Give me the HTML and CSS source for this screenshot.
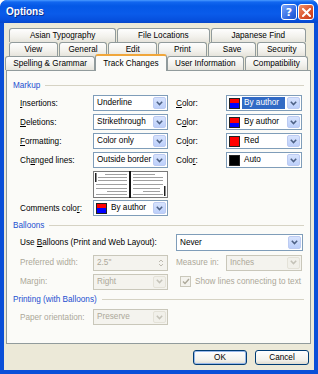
FILE: index.html
```html
<!DOCTYPE html>
<html lang="en">
<head>
  <meta charset="UTF-8">
  <title>Options</title>
  <link rel="stylesheet" href="styles.css">
</head>
<body>
  <div class="window">
    <div class="titlebar">
      <span class="title">Options</span>
      <div class="caption-btns">
        <span class="cbtn help">?</span>
        <span class="cbtn close">
          <svg width="9" height="9" viewBox="0 0 9 9"><path d="M1 1 L8 8 M8 1 L1 8" stroke="#fff" stroke-width="2" stroke-linecap="square"/></svg>
        </span>
      </div>
    </div>

    <div class="client">
      <div class="tabs">
        <div class="tab-row back grow">
          <span class="tab">Asian Typography</span>
          <span class="tab">File Locations</span>
          <span class="tab">Japanese Find</span>
        </div>
        <div class="tab-row back equal">
          <span class="tab">View</span>
          <span class="tab">General</span>
          <span class="tab">Edit</span>
          <span class="tab">Print</span>
          <span class="tab">Save</span>
          <span class="tab">Security</span>
        </div>
        <div class="tab-row front grow">
          <span class="tab">Spelling &amp; Grammar</span>
          <span class="tab active">Track Changes</span>
          <span class="tab">User Information</span>
          <span class="tab">Compatibility</span>
        </div>
      </div>

      <div class="panel">
        <div class="group-title first"><span>Markup</span></div>
        <div class="grid markup">
          <span class="label"><u>I</u>nsertions:</span>
          <div class="select"><span class="val">Underline</span><span class="arrow"><svg width="7" height="5" viewBox="0 0 7 5"><path d="M0.8 0.8 L3.5 3.6 L6.2 0.8" fill="none" stroke="#4d6185" stroke-width="1.5"/></svg></span></div>
          <span class="label color-label"><u>C</u>olor:</span>
          <div class="select"><span class="swatch author"></span><span class="val hl">By author</span><span class="arrow"><svg width="7" height="5" viewBox="0 0 7 5"><path d="M0.8 0.8 L3.5 3.6 L6.2 0.8" fill="none" stroke="#4d6185" stroke-width="1.5"/></svg></span></div>

          <span class="label"><u>D</u>eletions:</span>
          <div class="select"><span class="val">Strikethrough</span><span class="arrow"><svg width="7" height="5" viewBox="0 0 7 5"><path d="M0.8 0.8 L3.5 3.6 L6.2 0.8" fill="none" stroke="#4d6185" stroke-width="1.5"/></svg></span></div>
          <span class="label color-label">C<u>o</u>lor:</span>
          <div class="select"><span class="swatch author"></span><span class="val">By author</span><span class="arrow"><svg width="7" height="5" viewBox="0 0 7 5"><path d="M0.8 0.8 L3.5 3.6 L6.2 0.8" fill="none" stroke="#4d6185" stroke-width="1.5"/></svg></span></div>

          <span class="label"><u>F</u>ormatting:</span>
          <div class="select"><span class="val">Color only</span><span class="arrow"><svg width="7" height="5" viewBox="0 0 7 5"><path d="M0.8 0.8 L3.5 3.6 L6.2 0.8" fill="none" stroke="#4d6185" stroke-width="1.5"/></svg></span></div>
          <span class="label color-label">Co<u>l</u>or:</span>
          <div class="select"><span class="swatch red"></span><span class="val">Red</span><span class="arrow"><svg width="7" height="5" viewBox="0 0 7 5"><path d="M0.8 0.8 L3.5 3.6 L6.2 0.8" fill="none" stroke="#4d6185" stroke-width="1.5"/></svg></span></div>

          <span class="label">Ch<u>a</u>nged lines:</span>
          <div class="select"><span class="val">Outside border</span><span class="arrow"><svg width="7" height="5" viewBox="0 0 7 5"><path d="M0.8 0.8 L3.5 3.6 L6.2 0.8" fill="none" stroke="#4d6185" stroke-width="1.5"/></svg></span></div>
          <span class="label color-label">Colo<u>r</u>:</span>
          <div class="select"><span class="swatch black"></span><span class="val">Auto</span><span class="arrow"><svg width="7" height="5" viewBox="0 0 7 5"><path d="M0.8 0.8 L3.5 3.6 L6.2 0.8" fill="none" stroke="#4d6185" stroke-width="1.5"/></svg></span></div>

          <span></span>
          <div class="preview">
            <svg width="75" height="27" viewBox="0 0 75 27">
              <rect x="0.5" y="0.5" width="74" height="26" fill="#fff" stroke="#7a7a7a"/>
              <g fill="#a0a0a0">
                <rect x="12" y="3" width="22" height="1"/>
                <rect x="5" y="6" width="29" height="1"/>
                <rect x="5" y="9" width="29" height="1"/>
                <rect x="3" y="13" width="31" height="1"/>
                <rect x="3" y="17" width="31" height="1"/>
                <rect x="14" y="20" width="20" height="1"/>
                <rect x="3" y="23" width="31" height="1"/>
                <rect x="40" y="3" width="22" height="1"/>
                <rect x="40" y="6" width="30" height="1"/>
                <rect x="40" y="9" width="30" height="1"/>
                <rect x="40" y="13" width="30" height="1"/>
                <rect x="40" y="17" width="27" height="1"/>
                <rect x="50" y="20" width="17" height="1"/>
                <rect x="40" y="23" width="30" height="1"/>
              </g>
              <rect x="2" y="2" width="1.5" height="9" fill="#222"/>
              <rect x="36" y="0" width="2" height="27" fill="#111"/>
              <rect x="71" y="15" width="1.5" height="10" fill="#222"/>
            </svg>
          </div>
          <span></span><span></span>
        </div>

        <div class="grid comments">
          <span class="label">Comments colo<u>r</u>:</span>
          <div class="select"><span class="swatch author"></span><span class="val">By author</span><span class="arrow"><svg width="7" height="5" viewBox="0 0 7 5"><path d="M0.8 0.8 L3.5 3.6 L6.2 0.8" fill="none" stroke="#4d6185" stroke-width="1.5"/></svg></span></div>
        </div>

        <div class="group-title"><span>Balloons</span></div>
        <div class="grid balloons">
          <span class="label wide">Use <u>B</u>alloons (Print and Web Layout):</span>
          <div class="select never"><span class="val">Never</span><span class="arrow"><svg width="7" height="5" viewBox="0 0 7 5"><path d="M0.8 0.8 L3.5 3.6 L6.2 0.8" fill="none" stroke="#4d6185" stroke-width="1.5"/></svg></span></div>

          <span class="label off">Preferred width:</span>
          <div class="select off"><span class="val">2.5"</span><span class="spin"><svg width="6" height="10" viewBox="0 0 6 10"><path d="M1 4 L3 2 L5 4 M1 6 L3 8 L5 6" fill="none" stroke="#bdbab0" stroke-width="1"/></svg></span></div>
          <span class="label off color-label">Measure in:</span>
          <div class="select off"><span class="val">Inches</span><span class="arrow"><svg width="7" height="5" viewBox="0 0 7 5"><path d="M0.8 0.8 L3.5 3.6 L6.2 0.8" fill="none" stroke="#c4c2b8" stroke-width="1.5"/></svg></span></div>

          <span class="label off">Margin:</span>
          <div class="select off"><span class="val">Right</span><span class="arrow"><svg width="7" height="5" viewBox="0 0 7 5"><path d="M0.8 0.8 L3.5 3.6 L6.2 0.8" fill="none" stroke="#c4c2b8" stroke-width="1.5"/></svg></span></div>
          <label class="check off">
            <span class="box"><svg width="8" height="7" viewBox="0 0 8 7"><path d="M1 3.5 L3 5.5 L7 1" fill="none" stroke="#aca899" stroke-width="1.4"/></svg></span>
            Show lines connecting to text
          </label>
        </div>

        <div class="group-title printing-title"><span>Printing (with Balloons)</span></div>
        <div class="grid printing">
          <span class="label off">Paper orientation:</span>
          <div class="select off"><span class="val">Preserve</span><span class="arrow"><svg width="7" height="5" viewBox="0 0 7 5"><path d="M0.8 0.8 L3.5 3.6 L6.2 0.8" fill="none" stroke="#c4c2b8" stroke-width="1.5"/></svg></span></div>
        </div>
      </div>

      <div class="buttons">
        <button class="btn default">OK</button>
        <button class="btn">Cancel</button>
      </div>
    </div>
  </div>
</body>
</html>
```

FILE: styles.css
```css
body {
  margin: 0;
  font-family: "Liberation Sans", Arial, sans-serif;
  font-size: 8.2px;
  color: #000;
  background: #fff;
}

/* Window frame */
.window {
  width: 318px;
  height: 374px;
  box-sizing: border-box;
  background: #0a4fd8;
  border-radius: 7px 7px 0 0;
  padding: 0 4px 4px;
  display: flex;
  flex-direction: column;
  overflow: hidden;
}
.titlebar {
  height: 23px;
  margin: 0 -4px;
  padding: 0 4px 0 6px;
  display: flex;
  align-items: center;
  justify-content: space-between;
  background: linear-gradient(#4a9bff 0, #1267f0 2px, #0458e6 6px, #0a5bea 14px, #0650de 20px, #0847c8 23px);
  border-radius: 7px 7px 0 0;
}
.title {
  color: #fff;
  font-weight: bold;
  font-size: 10px;
  text-shadow: 1px 1px 0 #0a2f8c;
}
.caption-btns {
  display: flex;
  gap: 1px;
  margin-top: 1px;
}
.cbtn {
  width: 14px;
  height: 14px;
  border: 1px solid #fff;
  border-radius: 3px;
  display: flex;
  align-items: center;
  justify-content: center;
  color: #fff;
  font-weight: bold;
  font-size: 11px;
  font-family: "DejaVu Sans", sans-serif;
}
.help { background: linear-gradient(135deg, #7aa6fb, #2a63e0 70%, #1b50c8); }
.close { background: linear-gradient(135deg, #f0916b, #d9502a 60%, #c4391a); }

.client {
  flex: 1;
  background: #ece9d8;
  padding-top: 5px;
  display: flex;
  flex-direction: column;
}

/* Tabs */
.tab-row {
  display: flex;
  height: 14px;
}
.tab-row.back {
  margin: 0 7px 0 5px;
}
.tab-row.front {
  margin: 0 5px 0 1px;
  position: relative;
  z-index: 1;
}
.tab {
  height: 14px;
  box-sizing: border-box;
  border: 1px solid #919b9c;
  border-bottom: none;
  border-radius: 3px 3px 0 0;
  background: linear-gradient(#fefefe, #f2f1ec 60%, #e6e4dc);
  display: flex;
  align-items: center;
  justify-content: center;
  white-space: nowrap;
  margin-right: 1px;
}
.grow .tab { flex: 1 1 auto; padding: 0 4px; }
.equal .tab { flex: 1 1 0; }
.tab.active {
  height: 17px;
  margin-top: -2px;
  margin-left: -1px;
  margin-right: 0;
  border-top: 2px solid #f0a63a;
  background: #fbfbf8;
}

/* Panel */
.panel {
  height: 274px;
  box-sizing: border-box;
  margin: 0 3px 0 2px;
  border: 1px solid #919b9c;
  background: #fbfbf8;
  padding: 0 6px;
}
.group-title {
  display: flex;
  align-items: center;
  height: 12px;
  margin-top: 3px;
  color: #1c4fd0;
}
.group-title.first { margin-top: 8px; }
.group-title.printing-title { margin-top: 4px; }
.group-title::after {
  content: "";
  flex: 1;
  height: 1px;
  background: #d6d3c4;
  margin-left: 5px;
}

.grid {
  display: grid;
  grid-template-columns: 73px 75px 58px 76px;
  grid-auto-rows: 16px;
  row-gap: 3px;
  margin-left: 7px;
  align-items: center;
}
.markup { margin-top: 4px; grid-template-rows: 16px 16px 16px 16px 27px; row-gap: 3px; }
.markup .preview { height: 27px; }
.comments { margin-top: 2px; }
.balloons { margin-top: 3px; grid-auto-rows: 15px; grid-template-rows: 17px; row-gap: 4px; }
.printing { margin-top: 4px; }

.label { white-space: nowrap; }
.label u { text-decoration: underline; }
.label.wide { grid-column: 1 / 3; }
.color-label { padding-left: 8px; }
.off { color: #aca899; }

.select {
  height: 16px;
  box-sizing: border-box;
  border: 1px solid #7f9db9;
  background: #fff;
  display: flex;
  align-items: center;
  padding: 1px;
}
.select .val {
  flex: 1;
  padding: 0 2px;
  height: 12px;
  line-height: 12px;
  white-space: nowrap;
}
.select .val.hl {
  background: #316ac5;
  color: #fff;
  margin-right: 2px;
}
.select.never {
  grid-column: 3 / 5;
  margin-left: 8px;
  height: 17px;
  margin-right: -1px;
}
.arrow {
  width: 13px;
  height: 100%;
  box-sizing: border-box;
  border: 1px solid #bccbf2;
  border-radius: 2px;
  background: linear-gradient(#d7e3fd, #bccffa);
  display: flex;
  align-items: center;
  justify-content: center;
}
.select.off {
  border-color: #c9c7ba;
  background: #f4f3ee;
}
.select.off .arrow {
  border-color: #e4e2d8;
  background: #f1f0ea;
}
.spin {
  width: 11px;
  height: 100%;
  display: flex;
  align-items: center;
  justify-content: center;
}
.swatch {
  width: 11px;
  height: 11px;
  border: 1px solid #222;
  box-sizing: border-box;
  margin: 0 2px 0 1px;
  flex: none;
}
.swatch.author { background: linear-gradient(#f00 50%, #00f 50%); }
.swatch.red { background: #f00; }
.swatch.black { background: #000; }

.check {
  grid-column: 3 / 5;
  margin-left: 12px;
  display: flex;
  align-items: center;
  gap: 4px;
  white-space: nowrap;
}
.check .box {
  width: 11px;
  height: 11px;
  box-sizing: border-box;
  border: 1px solid #cac8bb;
  background: #f4f3ee;
  display: flex;
  align-items: center;
  justify-content: center;
}

/* Buttons */
.buttons {
  flex: 1;
  display: flex;
  justify-content: flex-end;
  align-items: center;
  gap: 8px;
  padding-right: 5px;
}
.btn {
  width: 54px;
  height: 15px;
  padding: 0;
  font-family: inherit;
  font-size: 8.2px;
  border: 1px solid #003c74;
  border-radius: 3px;
  background: linear-gradient(#ffffff, #f3f2ec 70%, #dedbd0);
}
.btn.default {
  box-shadow: inset 0 0 0 1px #98b8ea;
}
```
